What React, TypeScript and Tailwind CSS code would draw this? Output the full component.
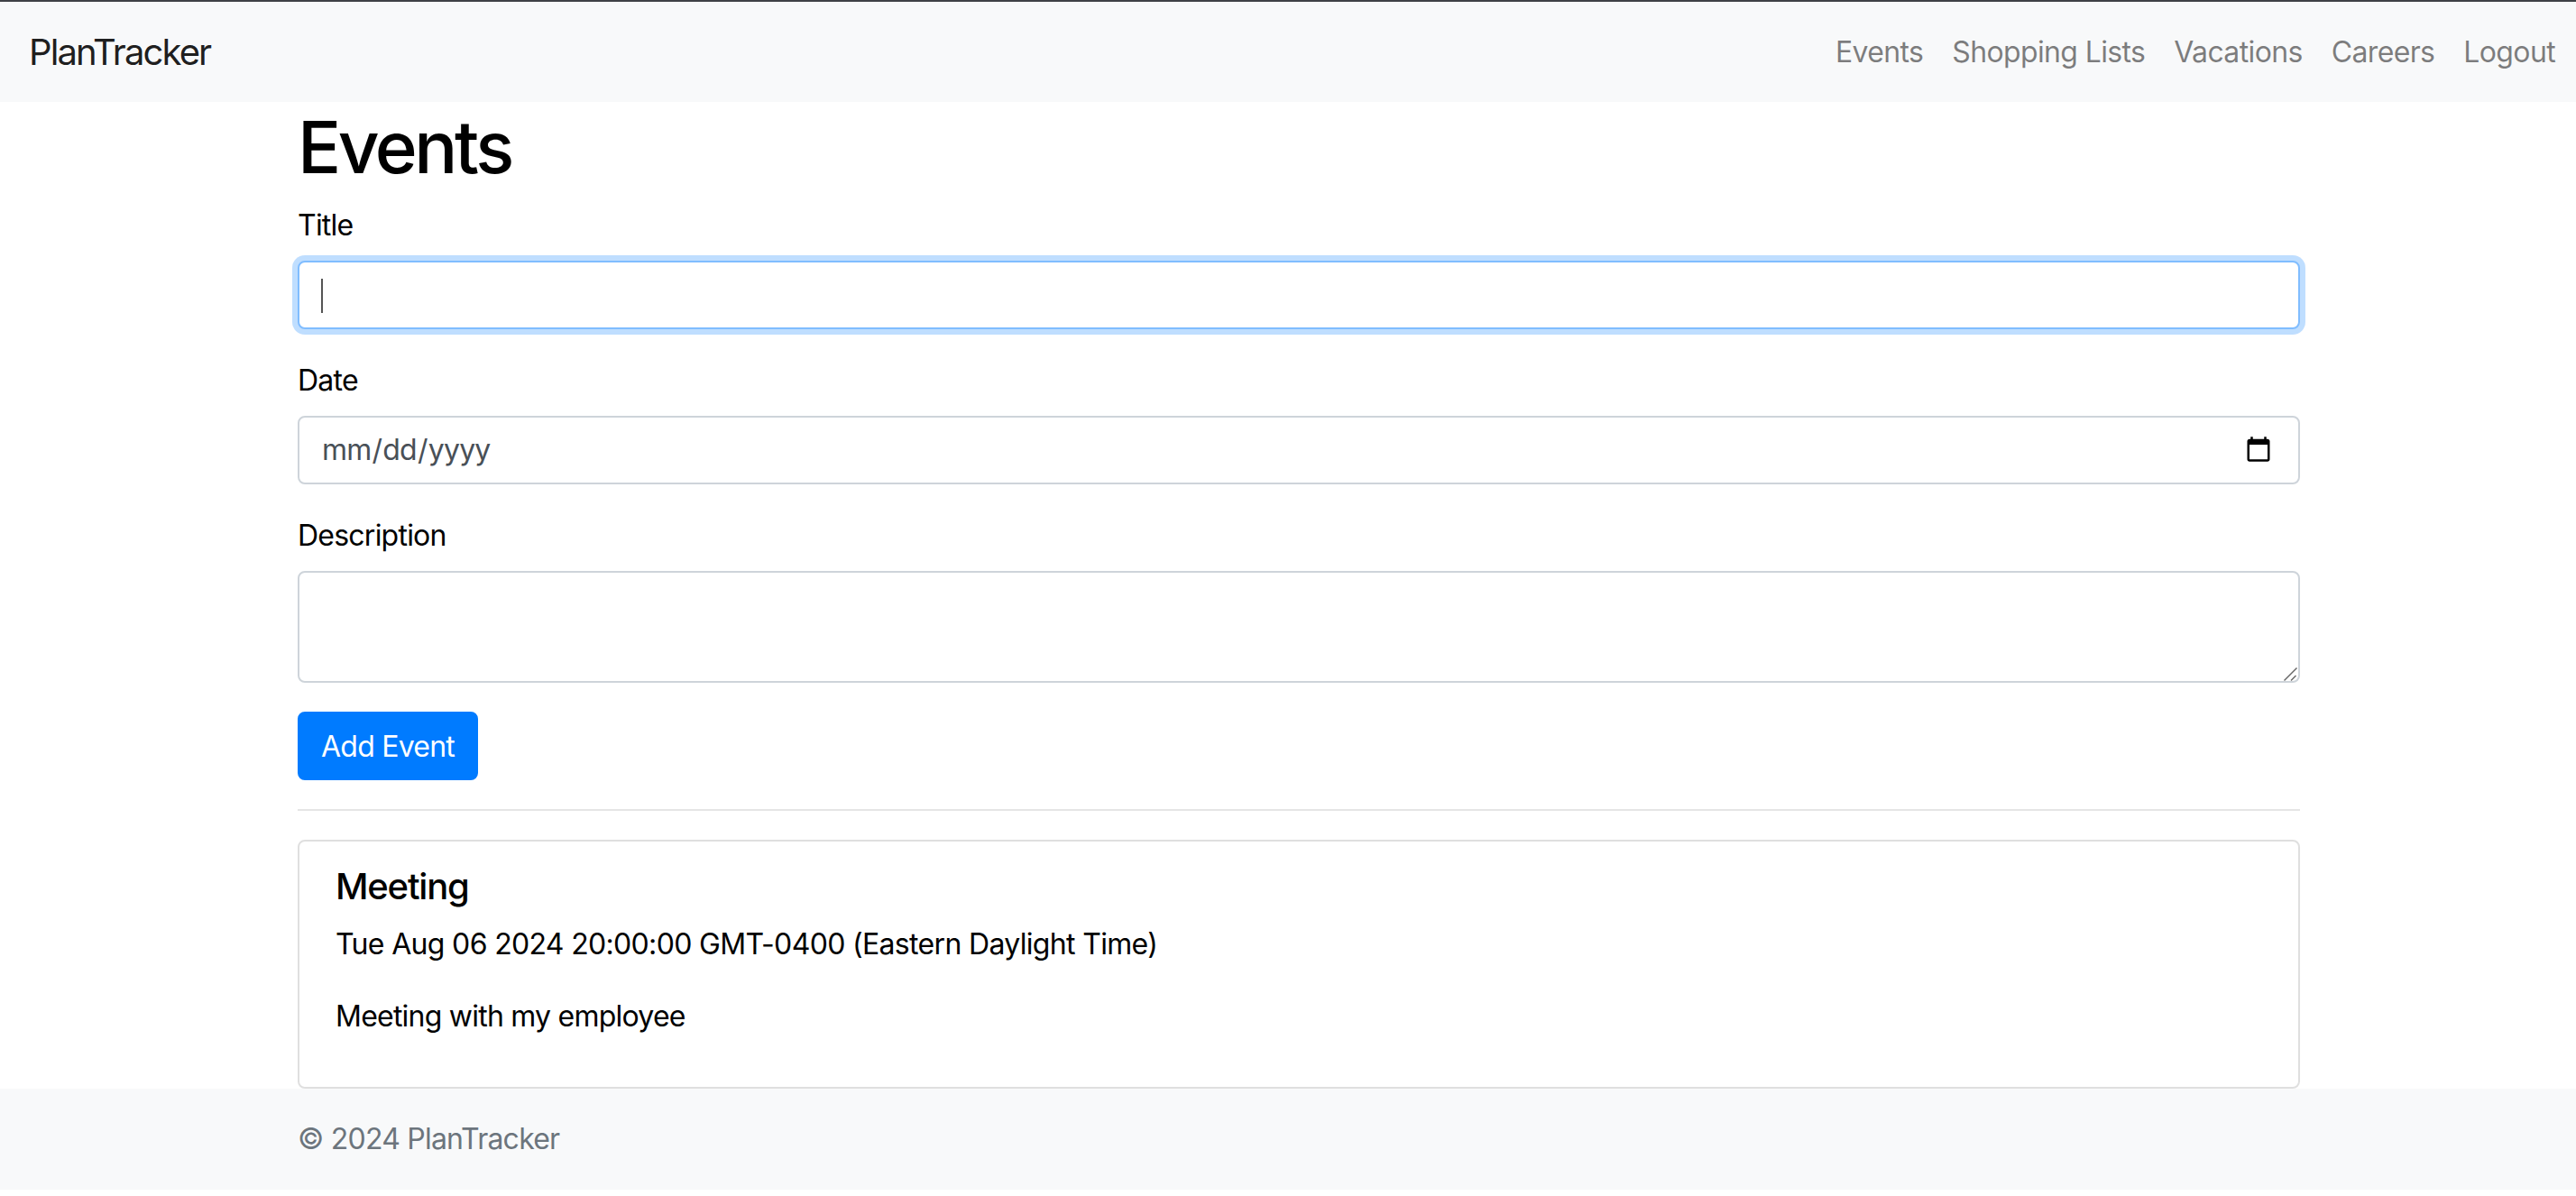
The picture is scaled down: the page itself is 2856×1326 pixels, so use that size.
const NAV_LINKS = ["Events", "Shopping Lists", "Vacations", "Careers", "Logout"];

function Field({ label, children }: { label: string; children: React.ReactNode }) {
  return (
    <div className="mb-8">
      <label className="mb-4 block h-12 leading-[50px]">{label}</label>
      {children}
    </div>
  );
}

export default function App() {
  return (
    <div className="flex h-screen flex-col overflow-hidden bg-white pb-[7px] font-['Inter',_'Liberation_Sans',_sans-serif] text-[32px] tracking-[-0.024em] text-black">
      <nav className="flex h-[113px] shrink-0 items-center justify-between border-t-2 border-[#3f4146] bg-[#f8f9fa] pl-8 pr-[7px]">
        <a className="text-[40px] tracking-[-0.047em] text-black/90">PlanTracker</a>
        <ul className="flex">
          {NAV_LINKS.map((link) => (
            <li key={link} className="px-4 tracking-[-0.02em] text-black/50">
              {link}
            </li>
          ))}
        </ul>
      </nav>

      <main className="ml-[330px] min-h-0 w-[2220px] flex-1">
        <h1 className="mb-4 h-24 text-[80px] leading-[100px] font-medium tracking-[-0.043em]">Events</h1>
        <form>
          <Field label="Title">
            <div className="relative">
              <input
                type="text"
                className="block h-[76px] w-full rounded-lg border-2 border-[#80bdff] bg-white px-6 caret-transparent shadow-[0_0_0_6px_rgba(0,123,255,0.25)] outline-none"
              />
              <span className="absolute top-[20px] left-[26px] h-[38px] w-0.5 bg-[#555]" />
            </div>
          </Field>
          <Field label="Date">
            <input
              type="date"
              className="block h-[76px] w-full rounded-lg border-2 border-[#ced4da] bg-white px-6 text-[#495057] outline-none [&::-webkit-calendar-picker-indicator]:mr-[2px]"
            />
          </Field>
          <Field label="Description">
            <div className="relative">
              <textarea className="block h-[124px] w-full resize-none rounded-lg border-2 border-[#ced4da] bg-white px-6 py-3 text-[#495057] outline-none" />
              {/* resize grip */}
              <svg className="absolute right-[3px] bottom-[2px] h-[15px] w-[15px]" viewBox="0 0 15 15" fill="none" stroke="#666" strokeWidth="1.4">
                <path d="M0.5 14.5 L14.5 0.5" />
                <path d="M8 14.5 L13.5 9" />
              </svg>
            </div>
          </Field>
          <button
            type="button"
            className="h-[76px] rounded-lg border-2 border-[#007bff] bg-[#007bff] px-6 pt-0.5 text-white"
          >
            Add Event
          </button>
        </form>

        <hr className="my-8 border-t-2 border-black/10" />

        <div className="rounded-lg border-2 border-black/[0.125] px-10 pt-[26px] pb-[22px]">
          <h5 className="mb-4 text-[40px] leading-[48px] font-medium tracking-[-0.03em]">Meeting</h5>
          <p className="mb-8 leading-[48px] tracking-[-0.021em]">Tue Aug 06 2024 20:00:00 GMT-0400 (Eastern Daylight Time)</p>
          <p className="mb-8 leading-[48px]">Meeting with my employee</p>
        </div>
      </main>

      <footer className="relative flex h-[112px] shrink-0 items-center bg-[#f8f9fa] pl-[330px] text-[#6c757d]">
        © 2024 PlanTracker
      </footer>
    </div>
  );
}
